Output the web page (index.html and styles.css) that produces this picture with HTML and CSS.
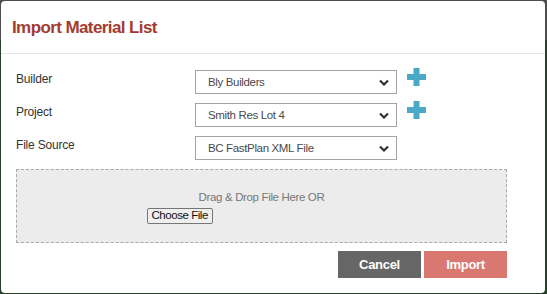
FILE: index.html
```html
<!DOCTYPE html>
<html lang="en">
  <head>
    <meta charset="UTF-8" />
    <meta name="viewport" content="width=device-width, initial-scale=1.0" />
    <title>Import Material List</title>
    <link rel="stylesheet" href="styles.css">
  </head>
  <body>
    <div class="modal">
      <div class="modal-header">
        <h2>Import Material List</h2>
      </div>

      <div class="modal-body">
        <div class="form-row">
          <label for="builder">Builder</label>
          <div class="select-wrap">
            <select id="builder">
              <option>Bly Builders</option>
            </select>
            <svg class="chevron" width="10" height="7" viewBox="0 0 10 7">
              <path d="M1 1.5 L5 5.5 L9 1.5" fill="none" stroke="#333" stroke-width="2.2" />
            </svg>
          </div>
          <svg class="add" width="19" height="18" viewBox="0 0 19 18">
            <path d="M6.5 0 H12.5 V6 H19 V12 H12.5 V18 H6.5 V12 H0 V6 H6.5 Z" fill="#4aa9c6" />
          </svg>
        </div>

        <div class="form-row">
          <label for="project">Project</label>
          <div class="select-wrap">
            <select id="project">
              <option>Smith Res Lot 4</option>
            </select>
            <svg class="chevron" width="10" height="7" viewBox="0 0 10 7">
              <path d="M1 1.5 L5 5.5 L9 1.5" fill="none" stroke="#333" stroke-width="2.2" />
            </svg>
          </div>
          <svg class="add" width="19" height="18" viewBox="0 0 19 18">
            <path d="M6.5 0 H12.5 V6 H19 V12 H12.5 V18 H6.5 V12 H0 V6 H6.5 Z" fill="#4aa9c6" />
          </svg>
        </div>

        <div class="form-row">
          <label for="source">File Source</label>
          <div class="select-wrap">
            <select id="source">
              <option>BC FastPlan XML File</option>
            </select>
            <svg class="chevron" width="10" height="7" viewBox="0 0 10 7">
              <path d="M1 1.5 L5 5.5 L9 1.5" fill="none" stroke="#333" stroke-width="2.2" />
            </svg>
          </div>
        </div>

        <div class="drop-zone">
          <p>Drag &amp; Drop File Here OR</p>
          <div class="file-pick">
            <button type="button" class="choose">Choose File</button>
          </div>
        </div>

        <div class="actions">
          <button type="button" class="btn btn-cancel">Cancel</button>
          <button type="button" class="btn btn-import">Import</button>
        </div>
      </div>
    </div>
  </body>
</html>
```

FILE: styles.css
```css
body {
  margin: 0;
  height: 294px;
  overflow: hidden;
  font-family: "Liberation Sans", Arial, sans-serif;
  background: linear-gradient(to bottom, #4d4d4d 0, #4d4d4d 40px, #27402b 40px);
}
.modal {
  margin: 1px 0 0 1px;
  width: 544px;
  height: 292px;
  background: white;
  border-radius: 4px;
}
.modal-header {
  height: 52px;
  border-bottom: 1px solid #e5e5e5;
  padding: 0 11px;
  display: flex;
  align-items: center;
}
.modal-header h2 {
  margin: 0;
  padding-top: 1px;
  font-size: 17px;
  letter-spacing: -0.6px;
  color: #a33b31;
}
.modal-body {
  padding: 16px 38px 0 15px;
}
.form-row {
  display: flex;
  align-items: flex-start;
  margin-bottom: 9px;
}
.form-row label {
  width: 179px;
  padding-top: 2px;
  font-size: 12px;
  line-height: 14px;
  letter-spacing: -0.2px;
  color: #333;
}
.select-wrap {
  position: relative;
  width: 202px;
}
.select-wrap select {
  appearance: none;
  -webkit-appearance: none;
  width: 202px;
  height: 24px;
  border: 1px solid #a3a3a3;
  border-radius: 0;
  background: white;
  padding: 0 0 0 12px;
  font-family: "Liberation Sans", Arial, sans-serif;
  font-size: 11.5px;
  letter-spacing: -0.35px;
  color: #4a4a4a;
}
.chevron {
  position: absolute;
  right: 8px;
  top: 9px;
  pointer-events: none;
}
.add {
  margin: -2px 0 0 10px;
}
.drop-zone {
  margin-top: 9px;
  width: 491px;
  box-sizing: border-box;
  height: 74px;
  border: 1px dashed #a9a9a9;
  background: #ececec;
  padding-top: 20px;
  text-align: center;
}
.drop-zone p {
  margin: 0;
  font-size: 11.5px;
  line-height: 14px;
  letter-spacing: -0.35px;
  color: #777;
}
.file-pick {
  width: 230px;
  margin: 1px auto 0;
  text-align: left;
}
.choose {
  height: 16px;
  padding: 0 4px;
  border: 1px solid #767676;
  border-radius: 2px;
  background: #efefef;
  font-family: "Liberation Sans", Arial, sans-serif;
  font-size: 11.5px;
  line-height: 13px;
  letter-spacing: -0.45px;
  color: #111;
}
.actions {
  display: flex;
  justify-content: flex-end;
  gap: 3px;
  width: 491px;
  margin-top: 8px;
}
.btn {
  width: 83px;
  height: 27px;
  border: none;
  color: white;
  font-family: "Liberation Sans", Arial, sans-serif;
  font-size: 13px;
  font-weight: bold;
  letter-spacing: -0.3px;
}
.btn-cancel {
  background: #666666;
}
.btn-import {
  background: #d97870;
}
```
